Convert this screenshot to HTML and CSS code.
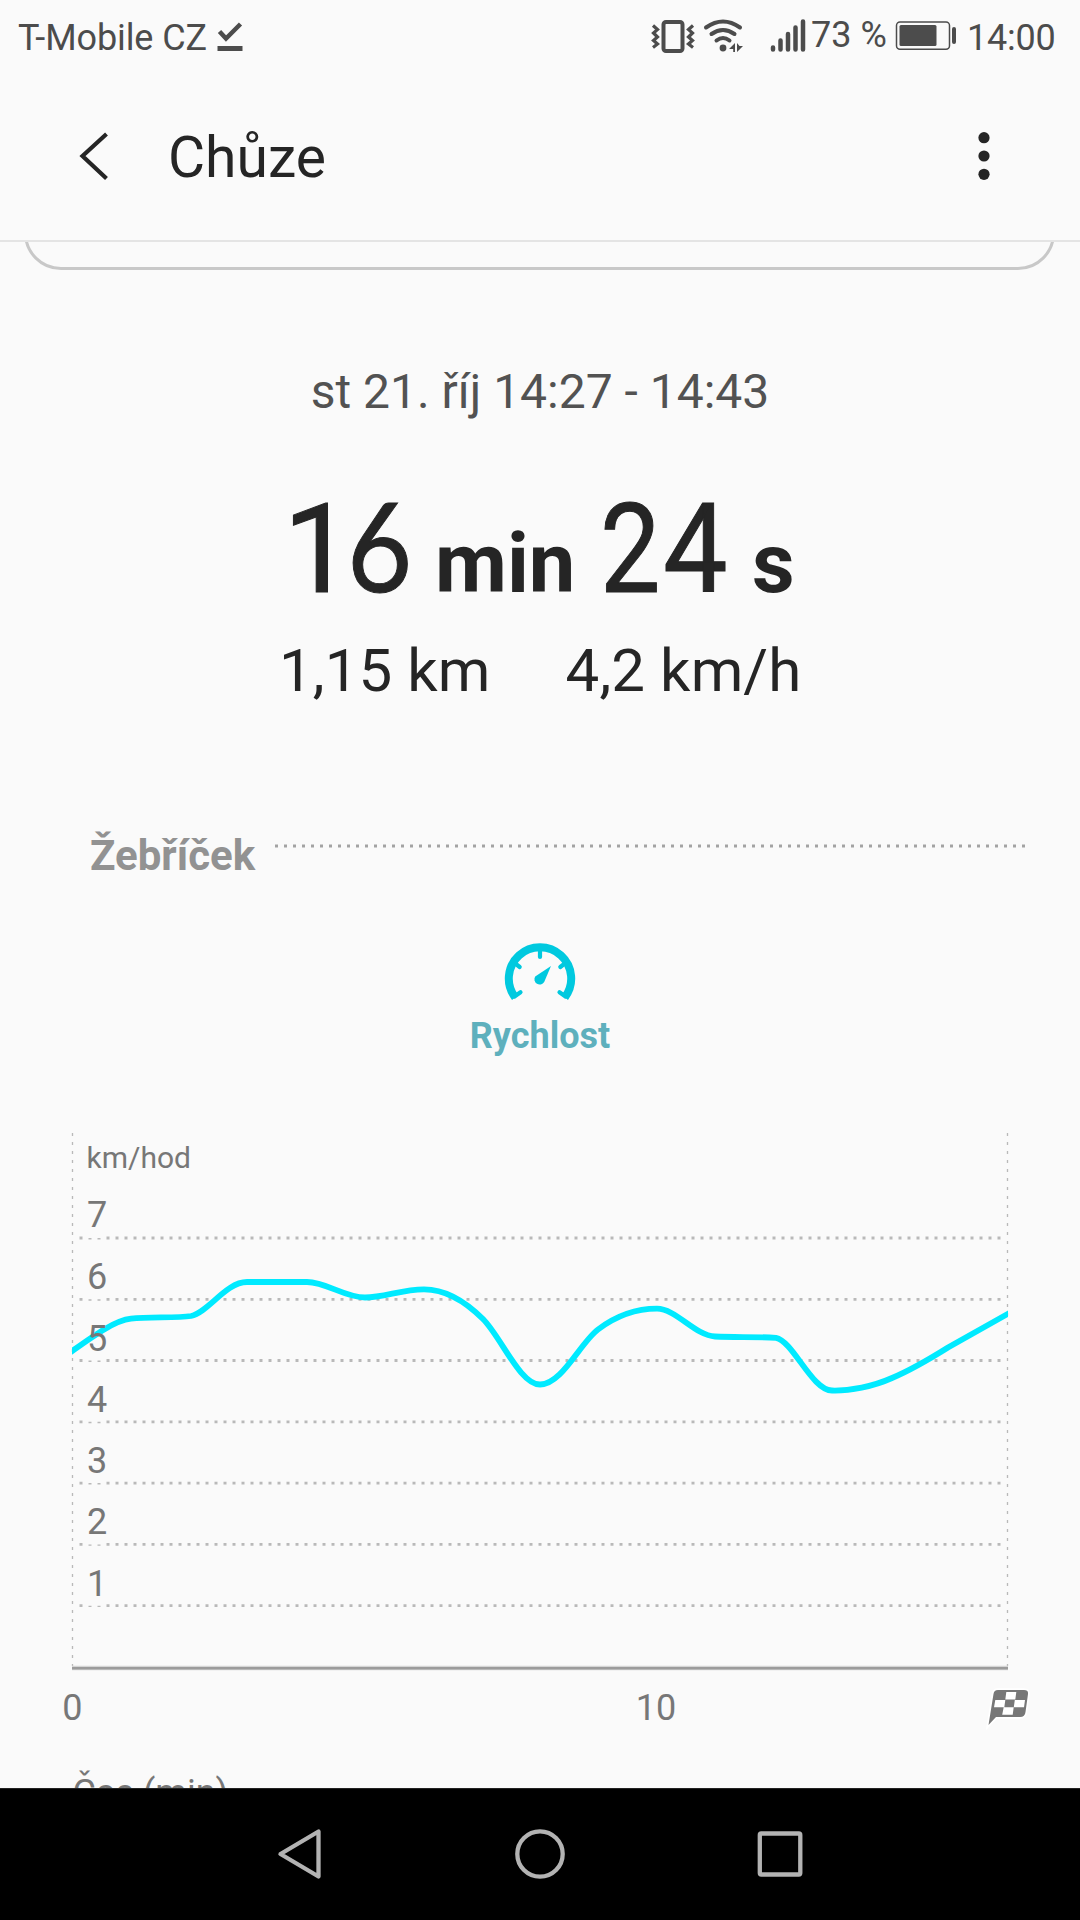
FILE: index.html
```html
<!DOCTYPE html>
<html lang="cs">
<head>
<meta charset="utf-8">
<title>Chůze</title>
<link rel="stylesheet" href="styles.css">
</head>
<body>
<div class="screen">
  <div class="status">
    <span class="carrier">T-Mobile CZ</span>
    <svg class="check" width="27" height="75" viewBox="216 0 27 75"><path d="M219.500 31.500 226 38.500 240.500 24" fill="none" stroke="#4c4c4c" stroke-width="4.500"/><path d="M217.500 46h25v5h-25z" fill="#4c4c4c"/></svg>
    <svg class="radios" width="160" height="75" viewBox="650 0 160 75" fill="none" stroke="#4c4c4c">
      <rect x="663.500" y="22" width="19" height="29" rx="2.500" stroke-width="4"/>
      <path d="M653 25.500 657.500 29.500 653.500 33 657.500 37 653.500 40.500 657.500 44 653 47.500M693 25.500 688.500 29.500 692.500 33 688.500 37 692.500 40.500 688.500 44 693 47.500" stroke-width="3.200"/>
      <g stroke-width="4" stroke-linecap="round"><path d="M706 27.500Q723 15.500 740 27.500M711.500 34Q723 26 734.500 34M716.500 40.500Q723 35.500 729.500 40.500"/></g>
      <circle cx="723" cy="48" r="3.400" fill="#4c4c4c" stroke="none"/>
      <path d="M735 43v9h-1.800v-3h-4.200zM737 43v9l6-6h-3.500z" fill="#4c4c4c" stroke="none"/>
      <g stroke-width="4.500" stroke-linecap="round"><path d="M773 47.500v2M780.500 40.500v9M788 34v15.500M795.500 27.500v22M803 21.500v28"/></g>
    </svg>
    <span class="percent">73 %</span>
    <svg width="64" height="75" viewBox="894 0 64 75"><rect x="896.500" y="22" width="53" height="27.300" rx="3.500" fill="none" stroke="#4c4c4c" stroke-width="1.500"/><rect x="899.500" y="25" width="37" height="21" rx="1.500" fill="#4c4c4c"/><rect x="952" y="27" width="4" height="17" rx="2" fill="#4c4c4c"/></svg>
    <span class="clock">14:00</span>
  </div>
  <header class="appbar">
    <svg width="30" height="50" viewBox="79 131 30 50"><path d="M106.500 134 82.500 156 106.500 178.500" fill="none" stroke="#252525" stroke-width="4.200"/></svg>
    <h1>Chůze</h1>
    <svg width="12" height="50" viewBox="978 131 12 50" fill="#252525"><circle cx="984" cy="137.700" r="5.600"/><circle cx="984" cy="156" r="5.600"/><circle cx="984" cy="174.300" r="5.600"/></svg>
  </header>
  <main class="content">
    <div class="card-clip"><div class="card"></div></div>
    <p class="date">st 21. říj 14:27 - 14:43</p>
    <div class="duration"><span class="num one">1</span><span class="num six">6</span><span class="unit min">min</span><span class="num two">2</span><span class="num four">4</span><span class="unit">s</span></div>
    <div class="totals"><span>1,15 km</span><span>4,2 km/h</span></div>
    <div class="section"><h2>Žebříček</h2><svg width="752" height="4" viewBox="0 0 752 4"><path d="M0 2H750" stroke="#a3a3a3" stroke-width="3" stroke-dasharray="3 6"/></svg></div>
    <div class="metric">
      <svg width="76" height="62" viewBox="502 941 76 62">
        <path d="M515.200 997.500A31.200 31.200 0 1 1 564.800 997.500" fill="none" stroke="#00c9df" stroke-width="8"/>
        <path d="M540 950v7M516.500 964.500 519.700 967M563.500 964.500 560.300 967M514.500 996.500 520.500 992.200M565.500 996.500 559.500 992.200" fill="none" stroke="#00c9df" stroke-width="4.200" stroke-linecap="round"/>
        <path d="M551 966 544.200 982A5.200 5.200 0 1 1 535.200 976.500Z" fill="#00c9df"/>
      </svg>
      <span>Rychlost</span>
    </div>
    <svg class="chart" width="1080" height="658" viewBox="0 1130 1080 658">
      <defs><clipPath id="plot"><rect x="72" y="1130" width="936" height="540"/></clipPath></defs>
      <g stroke="#b9b9b9" stroke-dasharray="3 6" fill="none">
        <path d="M72.500 1133V1666M1007.500 1133V1666" stroke-width="1.300"/>
        <path d="M79.500 1238H1001M79.500 1299.300H1001M79.500 1360.500H1001M79.500 1421.800H1001M79.500 1483.100H1001M79.500 1544.400H1001M79.500 1605.700H1001" stroke-width="2.800"/>
      </g>
      <path d="M87 1235h18v3h-18zM87 1296.300h18v3h-18zM87 1357.500h18v3h-18zM87 1418.800h18v3h-18zM87 1480.100h18v3h-18zM87 1541.400h18v3h-18zM87 1602.700h18v3h-18z" fill="#fafafa"/>
      <path d="M72 1668H1008" stroke="#d5d5d5" stroke-width="4.600"/><path d="M72 1668.200H1008" stroke="#9b9b9b" stroke-width="2.600"/>
      <path clip-path="url(#plot)" d="M68 1354C92 1337 114 1320.500 131 1318.700C150 1316.500 176 1318.500 191 1316C208 1312.500 226 1282 247 1282L307 1282C326 1282 345 1297.500 365 1297.500C384 1297.500 402 1289.300 424 1289.300C445 1289.300 466 1302 483 1319C501 1337 520 1384.500 540 1384.500C562 1384.500 580 1343 598 1329.500C616 1316 636 1308.700 657 1308.700C676 1308.700 695 1335.500 715 1336.500C735 1337.500 755 1336.500 776 1337.800C793 1341 812 1390.500 832 1390.500C850 1391 873 1386.500 892 1378C911 1370 928 1360 948 1347.500L1012 1311.500" fill="none" stroke="#00eaff" stroke-width="5.800"/>
      <g class="labels">
        <text class="small" x="86.500" y="1168">km/hod</text>
        <text x="87" y="1227">7</text><text x="87" y="1289">6</text><text x="87" y="1351">5</text><text x="87" y="1412">4</text><text x="87" y="1473">3</text><text x="87" y="1534">2</text><text x="87" y="1596">1</text>
        <text class="mid" x="72.300" y="1720">0</text><text class="mid" x="656" y="1720">10</text>
        <text x="72.500" y="1805">Čas (min)</text>
      </g>
      <path d="M998 1690H1024Q1028.500 1690 1028 1694L1025.500 1712Q1025 1717 1020 1717H996L988.500 1725 993.500 1694Q994 1690 998 1690Z" fill="#777" stroke="#fff" stroke-width="3.500" paint-order="stroke"/>
      <path d="M1006.300 1692h10l-1 7.500h-10zM995.300 1700h10l-1 7.200h-10.300zM1014.800 1700h10.200l-1 7.200h-10.200zM1003.700 1707.200h10l-1 7.500h-10.500z" fill="#fff"/>
    </svg>
  </main>
  <nav class="navbar">
    <svg width="48" height="56" viewBox="276 1826 48 56"><path d="M280.500 1854 318.500 1831.500V1876.500Z" fill="none" stroke="#b3b3b3" stroke-width="4.300" stroke-linejoin="round"/></svg>
    <svg width="56" height="56" viewBox="512 1826 56 56"><ellipse cx="540" cy="1854" rx="22.700" ry="22.700" fill="none" stroke="#b3b3b3" stroke-width="4.300"/></svg>
    <svg width="48" height="56" viewBox="756 1826 48 56"><rect x="759.800" y="1833.500" width="40.500" height="41" rx="1.500" fill="none" stroke="#b3b3b3" stroke-width="4.300"/></svg>
  </nav>
</div>
</body>
</html>
```
FILE: styles.css
```css
* { box-sizing: border-box; }
body, h1, h2, p { margin: 0; }
body { background: #fafafa; font-family: Roboto, "Liberation Sans", sans-serif; color: #252525; }
svg { display: block; flex: none; }
.screen { width: 1080px; height: 1920px; display: flex; flex-direction: column; overflow: hidden; background: #fafafa; }

.status { height: 75px; display: flex; font-size: 36px; line-height: 77px; color: #4c4c4c; white-space: nowrap; padding-left: 18px; }
.carrier { width: 198px; letter-spacing: -0.1px; }
.radios { margin-left: 407px; }
.percent { width: 84px; padding-left: 1px; line-height: 71px; }
.clock { padding-left: 9px; letter-spacing: -0.2px; }

.appbar { height: 167px; display: flex; align-items: flex-start; padding: 56px 90px 0 79px; border-bottom: 2px solid #e4e4e4; }
.appbar h1 { font-size: 57px; font-weight: 400; line-height: 54px; margin-left: 59px; flex: 1; }

.content { height: 1546px; display: flex; flex-direction: column; overflow: hidden; }
.card-clip { height: 28px; margin: 0 25px 0 24px; overflow: hidden; display: flex; align-items: flex-end; flex: none; }
.card { flex: 1; height: 100px; border: 3px solid #c8c8c8; border-radius: 37px; }
.date { margin-top: 92px; text-align: center; font-size: 48px; line-height: 60px; color: #525252; }

.duration { height: 130px; margin-top: 57px; padding-left: 283px; display: flex; align-items: baseline; line-height: 130px; white-space: nowrap; }
.num { font-size: 125px; -webkit-text-stroke: 1px #252525; transform-origin: 0 50%; }
.one { width: 64px; }
.six { width: 88px; font-family: Lato, sans-serif; transform: scaleX(0.9); }
.two { width: 63px; transform: scaleX(0.86); }
.four { width: 89px; transform: scaleX(0.92); }
.unit { font-size: 83px; font-weight: 700; }
.min { width: 165px; }

.totals { margin-top: 27px; display: flex; gap: 75px; padding-left: 279px; font-size: 60px; line-height: 70px; letter-spacing: 0.1px; }
.section { margin-top: 120px; height: 60px; display: flex; align-items: flex-start; padding-left: 90px; }
.section h2 { width: 184.500px; font-size: 42px; line-height: 60px; color: #929292; }
.section svg { margin-top: 18px; }
.metric { margin-top: 55px; height: 194px; display: flex; flex-direction: column; align-items: center; font-size: 36px; font-weight: 700; line-height: 40px; color: #5eb0bd; gap: 13px; }
.labels { font-size: 36px; fill: #777; }
.small { font-size: 30px; }
.mid { text-anchor: middle; }

.navbar { height: 132px; background: #000; border-top: 1px solid #222; display: flex; align-items: flex-start; gap: 188px; padding: 37px 0 0 276px; }
```
